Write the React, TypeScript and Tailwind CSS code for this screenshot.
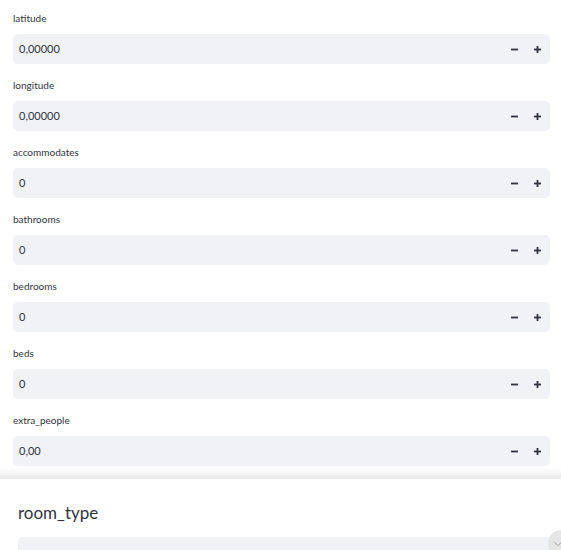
import { ChevronDown } from "lucide-react";

const fields = [
  { label: "latitude", value: "0,00000" },
  { label: "longitude", value: "0,00000" },
  { label: "accommodates", value: "0" },
  { label: "bathrooms", value: "0" },
  { label: "bedrooms", value: "0" },
  { label: "beds", value: "0" },
  { label: "extra_people", value: "0,00" },
];

function NumberInput({ label, value }: { label: string; value: string }) {
  return (
    <div className="flex flex-col">
      <span className="text-[10px] leading-[14px] mb-[9px] text-[#31333f]">{label}</span>
      <div className="h-[30px] rounded-[5px] bg-[#f0f2f6] flex items-center pl-[6px] pr-[2px]">
        <span className="flex-1 text-[11px] text-[#31333f]">{value}</span>
        <button className="w-[24px] h-[26px] flex items-center justify-center text-[#31333f]">
          <svg width="7" height="7" viewBox="0 0 7 7">
            <rect x="0" y="2.6" width="7" height="1.8" fill="currentColor" />
          </svg>
        </button>
        <button className="w-[22px] h-[26px] rounded-[4px] flex items-center justify-center text-[#31333f]">
          <svg width="7" height="7" viewBox="0 0 7 7">
            <rect x="0" y="2.6" width="7" height="1.8" fill="currentColor" />
            <rect x="2.6" y="0" width="1.8" height="7" fill="currentColor" />
          </svg>
        </button>
      </div>
    </div>
  );
}

export default function App() {
  return (
    <div
      className="w-[561px] h-[550px] overflow-hidden bg-white flex flex-col"
      style={{ fontFamily: "Lato, 'Open Sans', sans-serif" }}
    >
      <div className="shrink-0 flex flex-col gap-[14px] pl-[13px] pr-[11px] pt-[11px]">
        {fields.map(f => (
          <NumberInput key={f.label} label={f.label} value={f.value} />
        ))}
      </div>

      {/* divider shadow */}
      <div className="shrink-0 mt-[2px] h-[11px] bg-gradient-to-b from-white to-[#e9e9e9]" />

      <div className="shrink-0 relative h-[100px] bg-white pl-[18px]">
        <div className="pt-[22px] text-[17px] leading-[24px] text-[#31333f]">room_type</div>
        <div className="mt-[12px] h-[30px] mr-[10px] rounded-[5px] bg-[#f0f2f6]" />
        <div className="absolute left-[548px] top-[51px] w-[27px] h-[27px] rounded-full bg-[#e5e5e5] flex items-center justify-start pl-[3px] text-[#9a9a9a]">
          <ChevronDown size={14} strokeWidth={1.5} />
        </div>
      </div>
    </div>
  );
}
